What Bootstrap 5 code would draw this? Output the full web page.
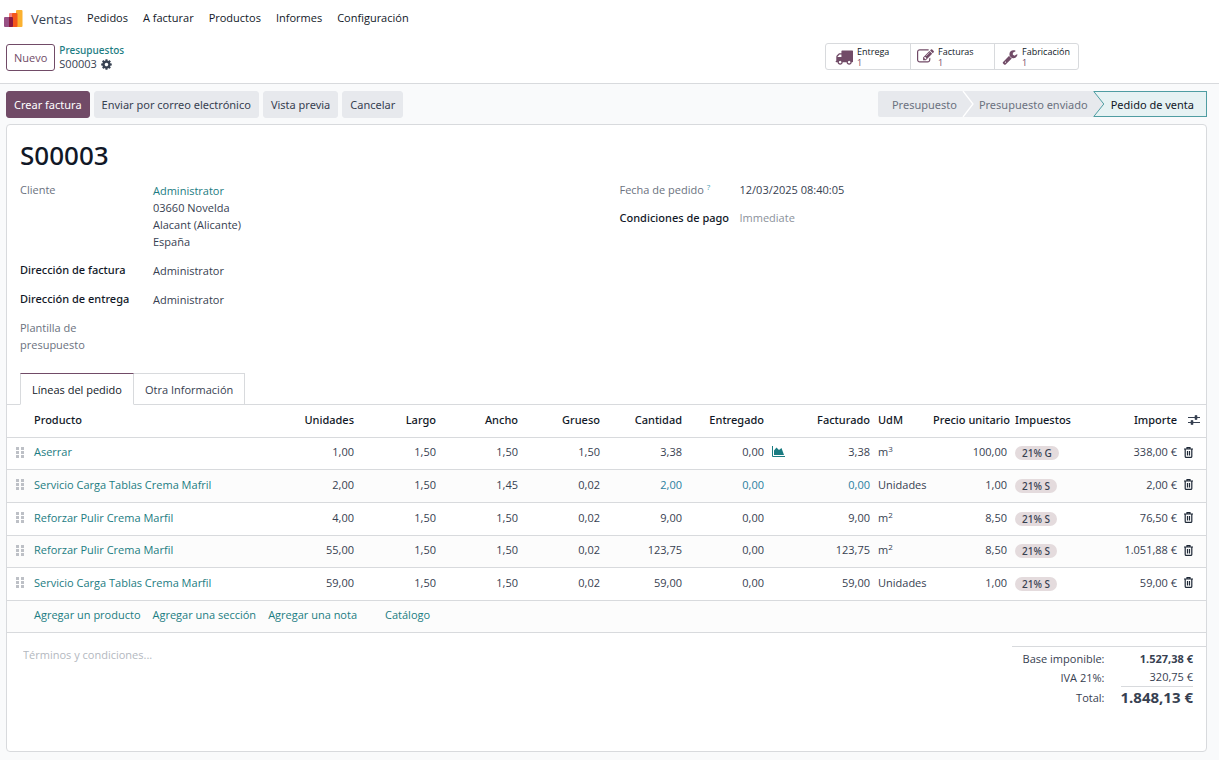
<!DOCTYPE html>
<html lang="es">
<head>
<meta charset="utf-8">
<meta name="viewport" content="width=device-width, initial-scale=1">
<title>S00003 - Ventas</title>
<link href="https://cdn.jsdelivr.net/npm/bootstrap@5.3.0/dist/css/bootstrap.min.css" rel="stylesheet">
<style>
  :root { --line: #d8dadd; --ink: #374151; --dark: #111827; --teal: #1b7c82; --plum: #714b67; --mist: #e7e9ed; }
  body { font: 400 11px/17px "Open Sans", "Noto Sans", sans-serif; color: var(--ink); background: #f9fafb; }
  a { color: var(--teal); text-decoration: none; }
  svg { display: block; flex: none; }
  .medium { font-family: "Noto Sans", sans-serif; font-weight: 500; }

  .top-menu { height: 36px; padding: 0 6px 0 4px; }
  .top-menu .app-name { font-size: 13px; color: var(--ink); padding: 2px 15px 0 8px; }
  .top-menu .nav { gap: 15px; padding-bottom: 2px; }
  .top-menu .nav-link { padding: 0; color: var(--dark); }

  .control-bar { height: 48px; padding: 7px 140px 0 6px; border-bottom: 1px solid var(--line); }
  .btn { --bs-btn-font-size: 11px; --bs-btn-line-height: 17px; --bs-btn-border-radius: 3px; --bs-btn-padding-x: 7px; --bs-btn-padding-y: 4px; }
  .btn-new { --bs-btn-color: var(--plum); --bs-btn-border-color: var(--plum); height: 27px; margin-top: 1px; }
  .crumbs { line-height: 14px; }
  .crumbs .medium { font-size: 10px; }
  .stat-box { border: 1px solid var(--line); border-radius: 3px; height: 27px; }
  .stat-box button { width: 84px; border: 0; background: none; padding: 0 0 0 9px; gap: 4px; font-size: 9px; line-height: 11px; color: var(--dark); text-align: left; }
  .stat-box button:nth-child(2) { padding-left: 6px; }
  .stat-box button:nth-child(3) { padding-left: 7px; }
  .stat-box button + button { border-left: 1px solid var(--line); }
  .stat-box .count { display: block; color: var(--plum); }

  .form-area { padding: 7px 12px 8px 6px; }
  .action-row { gap: 4px; margin-bottom: 6px; }
  .btn-main { --bs-btn-color: #fff; --bs-btn-bg: var(--plum); --bs-btn-border-color: var(--plum); }
  .btn-soft { --bs-btn-color: var(--ink); --bs-btn-bg: var(--mist); --bs-btn-border-color: var(--mist); }
  .status-line { height: 26px; }
  .status-line button { border: 0; padding: 0 5px; background: var(--mist); color: #6b7280; }
  .status-line button:first-child { padding-left: 14px; border-radius: 2px 0 0 2px; }
  .status-line button.current { background: #e6f2f3; color: var(--dark); border: solid #4f9da2; border-width: 1px 1px 1px 0; padding: 0 12px 0 6px; }

  .sheet { background: #fff; border: 1px solid var(--line); border-radius: 4px; min-height: 628px; }
  .sheet h1 { font-size: 26px; line-height: 32px; color: var(--dark); margin: 0 0 10px; }
  .sheet-head { padding: 14px 13px 20px; }
  .field-grid { display: grid; grid-template-columns: 1fr 1fr; column-gap: 26px; }
  .field-set { display: grid; grid-template-columns: 133px 1fr; row-gap: 11px; align-content: start; margin: 0; }
  .field-set.dates { grid-template-columns: 120px 1fr; }
  .field-set dt { font-weight: 400; color: #6b7280; padding-right: 24px; }
  .field-set.dates dt { padding-right: 0; }
  .field-set dt.medium { font-weight: 500; color: var(--dark); white-space: nowrap; padding-right: 0; }
  .field-set dd { margin: 0; padding-top: 1px; }
  .field-set.dates dd { padding: 0; }
  .field-set .faint { color: #8b919b; }
  .hint { font-size: 8px; color: #4da3b5; }

  .nav-tabs { --bs-nav-tabs-border-color: var(--line); padding-left: 13px; }
  .nav-tabs .nav-link { border: 1px solid var(--line); border-radius: 0; padding: 7px 11px 6px; color: var(--ink); }
  .nav-tabs .nav-item + .nav-item .nav-link { border-left: 0; }
  .nav-tabs .nav-link.active { color: var(--dark); border-color: var(--plum) var(--line) #fff; }

  .order-lines { table-layout: fixed; margin: 0; color: var(--ink); --bs-table-color: var(--ink); --bs-table-bg: transparent; border-color: var(--line); }
  .order-lines > * > tr > * { padding: 0 4px 3px; height: 33px; vertical-align: middle; white-space: nowrap; color: inherit; }
  .order-lines th { font-family: "Noto Sans", sans-serif; font-weight: 500; }
  .order-lines > thead > tr > th { color: var(--dark); height: 32px; padding-bottom: 2px; }
  .order-lines tbody tr:nth-child(3n+1) td, .order-lines tfoot td { height: 32px; }
  .order-lines tbody tr:nth-child(even), .order-lines tfoot tr { background: #fcfcfc; }
  .order-lines > tbody > tr > .info { color: #2a7fa0; }
  .order-lines > tbody > tr > .grip { padding: 0 0 2px 9px; }
  .order-lines > * > tr > .tool { padding: 0 0 2px 3px; }
  .order-lines sup { font-size: 8px; }
  .icon-btn { border: 0; background: none; padding: 0; display: block; color: #1f2937; }
  .tax { display: inline-block; background: #e4dbdd; border-radius: 8px; padding: 0 7px; font-size: 10px; line-height: 14px; vertical-align: middle; }
  .add-links { gap: 12px; }

  .terms { border: 0; padding: 0; resize: none; width: 50%; height: 40px; line-height: 17px; background: none; color: var(--ink); }
  .terms::placeholder { color: #b3b8c0; opacity: 1; }
  .sheet-foot { padding: 13px 0 0 16px; }
  .sums { border-top: 1px solid var(--line); width: 194px; padding: 2px 13px 0 0; }
  .sums table { width: 100%; }
  .sums th { font-weight: 400; }
  .sums th, .sums td { padding: 0; text-align: right; height: 19px; white-space: nowrap; }
  .sums th { padding-right: 16px; }
  .sums .base { font-weight: 700; }
  .sums .total { border-top: 1px solid var(--line); font-size: 15px; line-height: 21px; font-weight: 700; width: 70px; }
</style>
</head>
<body>
<!-- shared icon shapes -->
<svg width="0" height="0" class="d-none" aria-hidden="true">
  <symbol id="i-trash" viewBox="0 0 9 11"><path d="M0 2h9M3 2V.6h3V2M1.200 2v7.400q0 1 1 1h4.600q1 0 1-1V2M3.500 4v4.500M5.500 4v4.500" fill="none" stroke="currentColor" stroke-width="1.200"/></symbol>
  <symbol id="i-grip" viewBox="0 0 8 11"><path d="M0 0h3v3H0zM5 0h3v3H5zM0 4h3v3H0zM5 4h3v3H5zM0 8h3v3H0zM5 8h3v3H5z" fill="#bdc0c6"/></symbol>
</svg>

<div class="bg-white">
  <header class="top-menu d-flex align-items-center">
    <svg width="19" height="19" viewBox="0 0 19 19"><rect x="12" y="1" width="6.500" height="17" rx="1" fill="#fbb130"/><rect x="5" y="4" width="6" height="12" rx="1" fill="#f4817c"/><path d="M9 4h3.500q1 0 1 1v12q0 1-1 1H8V5q0-1 1-1z" fill="#f4571b"/><path d="M1 8h4v10H1q-1 0-1-1V9q0-1 1-1z" fill="#985184"/><path d="M5 8h3q1 0 1 1v8q0 1-1 1H5z" fill="#8b1841"/></svg>
    <a href="#" class="app-name">Ventas</a>
    <nav class="nav">
      <a class="nav-link" href="#">Pedidos</a>
      <a class="nav-link" href="#">A facturar</a>
      <a class="nav-link" href="#">Productos</a>
      <a class="nav-link" href="#">Informes</a>
      <a class="nav-link" href="#">Configuración</a>
    </nav>
  </header>

  <div class="control-bar d-flex align-items-start">
    <button type="button" class="btn btn-new">Nuevo</button>
    <div class="crumbs ms-1">
      <a href="#" class="medium">Presupuestos</a>
      <div class="d-flex align-items-center gap-1"><span>S00003</span>
        <button type="button" class="icon-btn" aria-label="Acciones"><svg width="11" height="11" viewBox="100 100 1600 1600" fill="#374151"><path d="M1152 896q0-106-75-181t-181-75-181 75-75 181 75 181 181 75 181-75 75-181zm512-109v222q0 12-8 23t-20 13l-185 28q-19 54-39 91 35 50 107 138 10 12 10 25t-9 23q-27 37-99 108t-94 71q-12 0-26-9l-138-108q-44 23-91 38-16 136-29 186-7 28-36 28h-222q-14 0-24.500-8.500t-11.500-21.500l-28-184q-49-16-90-37l-141 107q-10 9-25 9-14 0-25-11-126-114-165-168-7-10-7-23 0-12 8-23 15-21 51-66.500t54-70.500q-27-50-41-99l-183-27q-13-2-21-12.500t-8-23.500v-222q0-12 8-23t19-13l186-28q14-46 39-92-40-57-107-138-10-12-10-24 0-10 9-23 26-36 98.500-107.500t94.500-71.500q13 0 26 10l138 107q44-23 91-38 16-136 29-186 7-28 36-28h222q14 0 24.500 8.500t11.500 21.500l28 184q49 16 90 37l142-107q9-9 24-9 13 0 25 10 129 119 165 170 7 8 7 22 0 12-8 23-15 21-51 66.500t-54 70.500q26 50 41 98l183 28q13 2 21 12.500t8 23.500z"/></svg></button>
      </div>
    </div>
    <div class="stat-box d-flex ms-auto">
      <button type="button" class="d-flex align-items-center"><svg width="18" height="18" viewBox="0 0 1792 1792" fill="#714b67"><path d="M640 1408q0-52-38-90t-90-38-90 38-38 90 38 90 90 38 90-38 38-90zm-384-512h384v-256h-158q-13 0-22 9l-195 195q-9 9-9 22v30zm1280 512q0-52-38-90t-90-38-90 38-38 90 38 90 90 38 90-38 38-90zm256-1088v1024q0 15-4 26.500t-13.500 18.500-16.500 11.500-23.500 6-22.500 2-25.500 0-22.500-.5q0 106-75 181t-181 75-181-75-75-181h-384q0 106-75 181t-181 75-181-75-75-181h-64q-3 0-22.500.5t-25.500 0-22.500-2-23.500-6-16.500-11.500-13.500-18.500-4-26.500q0-26 19-45t45-19v-320q0-8-.5-35t0-38 2.500-34.500 6.500-37 14-30.500 22.500-30l198-198q19-19 50.500-32t58.500-13h160v-192q0-26 19-45t45-19h1024q26 0 45 19t19 45z"/></svg><span>Entrega<span class="count">1</span></span></button>
      <button type="button" class="d-flex align-items-center"><svg width="17" height="17" viewBox="0 0 1792 1792" fill="#714b67"><path d="M888 1184l116-116-152-152-116 116v56h96v96h56zm440-720q-16-16-33 1l-350 350q-17 17-1 33t33-1l350-350q17-17 1-33zm80 594v190q0 119-84.500 203.500t-203.500 84.500h-832q-119 0-203.500-84.500t-84.500-203.500v-832q0-119 84.500-203.500t203.500-84.500h832q63 0 117 25 15 7 18 23 3 17-9 29l-49 49q-14 14-32 8-23-6-45-6h-832q-66 0-113 47t-47 113v832q0 66 47 113t113 47h832q66 0 113-47t47-113v-126q0-13 9-22l64-64q15-15 35-7t20 29zm-96-738l288 288-672 672h-288v-288zm444 132l-92 92-288-288 92-92q28-28 68-28t68 28l152 152q28 28 28 68t-28 68z"/></svg><span>Facturas<span class="count">1</span></span></button>
      <button type="button" class="d-flex align-items-center"><svg width="16" height="16" viewBox="0 0 1792 1792" fill="#714b67"><path d="M448 1472q0-26-19-45t-45-19-45 19-19 45 19 45 45 19 45-19 19-45zm644-420l-682 682q-37 37-90 37-52 0-91-37l-106-108q-38-36-38-90 0-53 38-91l681-681q39 98 114.500 173.500t173.500 114.500zm634-435q0 39-23 106-47 134-164.500 217.500t-258.500 83.500q-185 0-316.500-131.500t-131.500-316.500 131.500-316.500 316.500-131.500q58 0 121.500 16.500t107.500 46.500q16 11 16 28t-16 28l-293 169v224l193 107q5-3 79-48.500t135.500-81 70.500-35.500q15 0 23.500 10t8.500 25z"/></svg><span>Fabricación<span class="count">1</span></span></button>
    </div>
  </div>
</div>

<main class="form-area">
  <div class="action-row medium d-flex">
    <button type="button" class="btn btn-main">Crear factura</button>
    <button type="button" class="btn btn-soft">Enviar por correo electrónico</button>
    <button type="button" class="btn btn-soft">Vista previa</button>
    <button type="button" class="btn btn-soft">Cancelar</button>
    <div class="status-line d-flex ms-auto">
      <button type="button">Presupuesto</button>
      <svg width="12" height="26" viewBox="0 0 12 26"><path d="M0 0h12v26H0z" fill="#e7e9ed"/><path d="M1 0l10 13L1 26" fill="none" stroke="#fff" stroke-width="1.300"/></svg>
      <button type="button">Presupuesto enviado</button>
      <svg width="12" height="26" viewBox="0 0 12 26"><path d="M0 0h12v26H0z" fill="#e7e9ed"/><path d="M.8.5l10 12.500-10 12.500H13V.5z" fill="#e6f2f3" stroke="#4f9da2"/></svg>
      <button type="button" class="current" aria-current="step">Pedido de venta</button>
    </div>
  </div>

  <section class="sheet d-flex flex-column">
    <div class="sheet-head">
      <h1 class="medium">S00003</h1>
      <div class="field-grid">
        <dl class="field-set">
          <dt>Cliente</dt>
          <dd><a href="#">Administrator</a><br>03660 Novelda<br>Alacant (Alicante)<br>España</dd>
          <dt class="medium">Dirección de factura</dt><dd>Administrator</dd>
          <dt class="medium">Dirección de entrega</dt><dd>Administrator</dd>
          <dt>Plantilla de presupuesto</dt><dd></dd>
        </dl>
        <dl class="field-set dates">
          <dt>Fecha de pedido <sup class="hint">?</sup></dt><dd>12/03/2025 08:40:05</dd>
          <dt class="medium">Condiciones de pago</dt><dd class="faint">Immediate</dd>
        </dl>
      </div>
    </div>

    <ul class="nav nav-tabs" role="tablist">
      <li class="nav-item"><button type="button" class="nav-link active" role="tab" aria-selected="true">Líneas del pedido</button></li>
      <li class="nav-item"><button type="button" class="nav-link" role="tab" aria-selected="false">Otra Información</button></li>
    </ul>

    <table class="table order-lines">
      <colgroup>
        <col style="width:23px"><col><col style="width:82px"><col style="width:82px"><col style="width:82px"><col style="width:82px"><col style="width:82px"><col style="width:82px"><col style="width:24px"><col style="width:82px"><col style="width:55px"><col style="width:82px"><col style="width:88px"><col style="width:82px"><col style="width:25px">
      </colgroup>
      <thead>
        <tr>
          <th></th><th>Producto</th><th class="text-end">Unidades</th><th class="text-end">Largo</th><th class="text-end">Ancho</th><th class="text-end">Grueso</th><th class="text-end">Cantidad</th><th class="text-end">Entregado</th><th></th><th class="text-end">Facturado</th><th>UdM</th><th class="text-end">Precio unitario</th><th>Impuestos</th><th class="text-end">Importe</th>
          <th class="tool"><button type="button" class="icon-btn ms-1" aria-label="Columnas"><svg width="12" height="10" viewBox="0 0 12 10"><path d="M0 2.500h12M0 7.500h12" stroke="#374151" stroke-width="1.200"/><path d="M7 .5h2v4H7zM3 5.500h2v4H3z" fill="#374151" stroke="#374151" stroke-width=".6"/></svg></button></th>
        </tr>
      </thead>
      <tbody>
        <tr>
          <td class="grip"><svg width="8" height="11"><use href="#i-grip"/></svg></td><td><a href="#">Aserrar</a></td><td class="text-end">1,00</td><td class="text-end">1,50</td><td class="text-end">1,50</td><td class="text-end">1,50</td><td class="text-end">3,38</td><td class="text-end">0,00</td>
          <td><button type="button" class="icon-btn" aria-label="Previsión"><svg width="13" height="11" viewBox="0 0 13 11"><path d="M.5 0v10.500H13" fill="none" stroke="#1b7c82"/><path d="M2 9V4.500L4.500 1.500 7 4l2.500-2L12 9z" fill="#1b7c82"/></svg></button></td>
          <td class="text-end">3,38</td><td>m<sup>3</sup></td><td class="text-end">100,00</td><td><span class="tax medium">21% G</span></td><td class="text-end">338,00 €</td>
          <td class="tool"><button type="button" class="icon-btn" aria-label="Eliminar"><svg width="9" height="11"><use href="#i-trash"/></svg></button></td>
        </tr>
        <tr>
          <td class="grip"><svg width="8" height="11"><use href="#i-grip"/></svg></td><td><a href="#">Servicio Carga Tablas Crema Mafril</a></td><td class="text-end">2,00</td><td class="text-end">1,50</td><td class="text-end">1,45</td><td class="text-end">0,02</td><td class="text-end info">2,00</td><td class="text-end info">0,00</td><td></td>
          <td class="text-end info">0,00</td><td>Unidades</td><td class="text-end">1,00</td><td><span class="tax medium">21% S</span></td><td class="text-end">2,00 €</td>
          <td class="tool"><button type="button" class="icon-btn" aria-label="Eliminar"><svg width="9" height="11"><use href="#i-trash"/></svg></button></td>
        </tr>
        <tr>
          <td class="grip"><svg width="8" height="11"><use href="#i-grip"/></svg></td><td><a href="#">Reforzar Pulir Crema Marfil</a></td><td class="text-end">4,00</td><td class="text-end">1,50</td><td class="text-end">1,50</td><td class="text-end">0,02</td><td class="text-end">9,00</td><td class="text-end">0,00</td><td></td>
          <td class="text-end">9,00</td><td>m<sup>2</sup></td><td class="text-end">8,50</td><td><span class="tax medium">21% S</span></td><td class="text-end">76,50 €</td>
          <td class="tool"><button type="button" class="icon-btn" aria-label="Eliminar"><svg width="9" height="11"><use href="#i-trash"/></svg></button></td>
        </tr>
        <tr>
          <td class="grip"><svg width="8" height="11"><use href="#i-grip"/></svg></td><td><a href="#">Reforzar Pulir Crema Marfil</a></td><td class="text-end">55,00</td><td class="text-end">1,50</td><td class="text-end">1,50</td><td class="text-end">0,02</td><td class="text-end">123,75</td><td class="text-end">0,00</td><td></td>
          <td class="text-end">123,75</td><td>m<sup>2</sup></td><td class="text-end">8,50</td><td><span class="tax medium">21% S</span></td><td class="text-end">1.051,88 €</td>
          <td class="tool"><button type="button" class="icon-btn" aria-label="Eliminar"><svg width="9" height="11"><use href="#i-trash"/></svg></button></td>
        </tr>
        <tr>
          <td class="grip"><svg width="8" height="11"><use href="#i-grip"/></svg></td><td><a href="#">Servicio Carga Tablas Crema Marfil</a></td><td class="text-end">59,00</td><td class="text-end">1,50</td><td class="text-end">1,50</td><td class="text-end">0,02</td><td class="text-end">59,00</td><td class="text-end">0,00</td><td></td>
          <td class="text-end">59,00</td><td>Unidades</td><td class="text-end">1,00</td><td><span class="tax medium">21% S</span></td><td class="text-end">59,00 €</td>
          <td class="tool"><button type="button" class="icon-btn" aria-label="Eliminar"><svg width="9" height="11"><use href="#i-trash"/></svg></button></td>
        </tr>
      </tbody>
      <tfoot>
        <tr><td></td><td colspan="14"><div class="add-links d-flex"><a href="#">Agregar un producto</a><a href="#">Agregar una sección</a><a href="#">Agregar una nota</a><a href="#" class="ms-3">Catálogo</a></div></td></tr>
      </tfoot>
    </table>

    <div class="sheet-foot d-flex justify-content-between">
      <textarea class="terms" aria-label="Términos y condiciones" placeholder="Términos y condiciones..."></textarea>
      <div class="sums">
        <table>
          <tr><th scope="row">Base imponible:</th><td class="base">1.527,38 €</td></tr>
          <tr><th scope="row">IVA 21%:</th><td>320,75 €</td></tr>
          <tr><th scope="row">Total:</th><td class="total">1.848,13 €</td></tr>
        </table>
      </div>
    </div>
  </section>
</main>
<script src="https://cdn.jsdelivr.net/npm/bootstrap@5.3.0/dist/js/bootstrap.bundle.min.js"></script>
</body>
</html>
